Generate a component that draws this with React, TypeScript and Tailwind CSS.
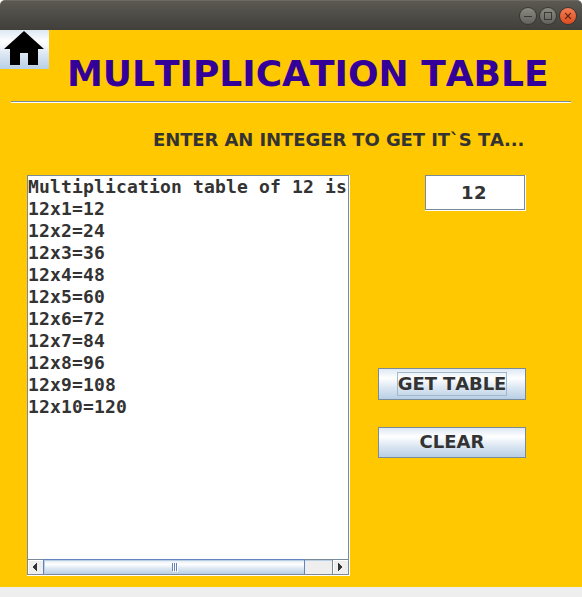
import React from "react";

const rows = Array.from({ length: 10 }, (_, i) => `12x${i + 1}=${12 * (i + 1)}`);

const METAL =
  "bg-[linear-gradient(to_bottom,#dde8f3_0%,#ffffff_30%,#dde8f3_60%,#b8cfe5_100%)]";

function WindowButton({ kind }: { kind: "min" | "max" | "close" }) {
  const close = kind === "close";
  return (
    <svg width="20" height="20" viewBox="0 0 20 20" fill="none">
      <defs>
        <linearGradient id={`face-${kind}`} x1="0" y1="0" x2="0" y2="1">
          <stop offset="0" stopColor={close ? "#f67c54" : "#8b8981"} />
          <stop offset="1" stopColor={close ? "#dd4c20" : "#63625b"} />
        </linearGradient>
      </defs>
      <circle cx="10" cy="10" r="9" fill="#383733" />
      <circle cx="10" cy="10" r="8" fill={`url(#face-${kind})`} />
      {kind === "min" && <path d="M6 10.5h8" stroke="#3a3934" />}
      {kind === "max" && <rect x="6.5" y="6.5" width="7" height="7" stroke="#3a3934" />}
      {close && <path d="M7.2 7.2l5.6 5.6M12.8 7.2l-5.6 5.6" stroke="#51230f" strokeWidth="1.2" />}
    </svg>
  );
}

function Arrow({ left }: { left?: boolean }) {
  return (
    <svg width="4" height="8" viewBox="0 0 4 8" shapeRendering="crispEdges">
      <path d={left ? "M4 0v8L0 4.5v-1z" : "M0 0v8l4-3.5v-1z"} fill="#333" />
    </svg>
  );
}

function Grip() {
  return (
    <svg width="6" height="9" viewBox="0 0 6 9" shapeRendering="crispEdges">
      <path d="M1.5 1v8M3.5 1v8M5.5 1v8" stroke="#fff" />
      <path d="M0.5 0v8M2.5 0v8M4.5 0v8" stroke="#6382bf" />
    </svg>
  );
}

export default function App() {
  return (
    <div className="flex h-[597px] w-[582px] flex-col overflow-hidden bg-[#eeeeee] font-['DejaVu_Sans',sans-serif] font-bold text-[#333333] [font-kerning:none]">
      <div className="h-[30px] shrink-0 bg-white">
        <header className="flex h-[30px] items-center justify-end rounded-t-[5px] border-t border-[#6b6962] bg-[linear-gradient(to_bottom,#5b5952,#403f3a)] pr-1">
          <WindowButton kind="min" />
          <WindowButton kind="max" />
          <WindowButton kind="close" />
        </header>
      </div>

      <main className="h-[557px] shrink-0 bg-[#ffc800]">
        <div className="flex h-[71px] items-start">
          <button className={`h-[39px] w-[49px] shrink-0 ${METAL}`} aria-label="Home">
            <svg width="49" height="39" viewBox="0 0 49 39">
              <path d="M24 1L44 19H38V35H28V23H20V35H10V19H4z" fill="#000" />
            </svg>
          </button>
          <h1 className="mt-[23px] ml-[18px] whitespace-nowrap text-[36px] leading-[42px] text-[#330099]">
            MULTIPLICATION TABLE
          </h1>
        </div>
        <div className="mr-[11px] ml-[11px] h-[2px] border-t border-[#7a8a99] bg-white" />

        <p className="mt-[26px] ml-[153px] whitespace-nowrap text-[18px] leading-[21px] tracking-[-0.09px]">
          ENTER AN INTEGER TO GET IT`S TA...
        </p>

        <div className="mt-[25px] ml-[27px] flex">
          <section className="flex h-[401px] w-[323px] flex-col border-r border-b border-white">
            <div className="flex grow flex-col border border-[#7a8a99] bg-white">
              <div className="grow overflow-hidden whitespace-pre font-['DejaVu_Sans_Mono',monospace] text-[18px] leading-[22px] tracking-[0.163px]">
                <div>Multiplication table of 12 is</div>
                {rows.map((r) => (
                  <div key={r}>{r}</div>
                ))}
              </div>
              <div className="flex h-[15px] shrink-0 border-t border-[#7a8a99] bg-[#eeeeee]">
                <div className="flex w-[15px] items-start border-t border-l border-white pt-[2px] pl-1">
                  <Arrow left />
                </div>
                <div className={`-mt-px flex w-[262px] items-start justify-center border-x border-t border-[#6382bf] pt-[3px] pl-[2px] shadow-[inset_1px_1px_0_#b8cfe5] ${METAL}`}>
                  <Grip />
                </div>
                <div className="w-[27px] border-t border-[#b8cfe5]" />
                <div className="flex grow items-start border-l border-[#7a8a99] pt-[3px] pl-[5px] shadow-[inset_1px_1px_0_#fff]">
                  <Arrow />
                </div>
              </div>
            </div>
          </section>

          <div className="ml-[28px] flex w-[148px] flex-col items-end text-[18px]">
            <div className="h-[36px] w-[101px] border-r border-b border-white">
              <div className="flex h-[35px] items-center justify-center border border-[#7a8a99] bg-white pr-[2px] leading-[21px] tracking-[0.5px]">
                12
              </div>
            </div>
            <button className={`mt-[157px] flex h-[32px] w-[148px] items-center justify-center border border-[#7a8a99] ${METAL}`}>
              <span className="flex h-[24px] w-[110px] items-center justify-center whitespace-nowrap border border-[#a3b8cc] pb-px leading-[21px] tracking-[-0.09px]">
                GET TABLE
              </span>
            </button>
            <button className={`mt-[27px] flex h-[31px] w-[148px] items-center justify-center border border-[#7a8a99] pb-[2px] leading-[21px] ${METAL}`}>
              CLEAR
            </button>
          </div>
        </div>
      </main>
    </div>
  );
}
